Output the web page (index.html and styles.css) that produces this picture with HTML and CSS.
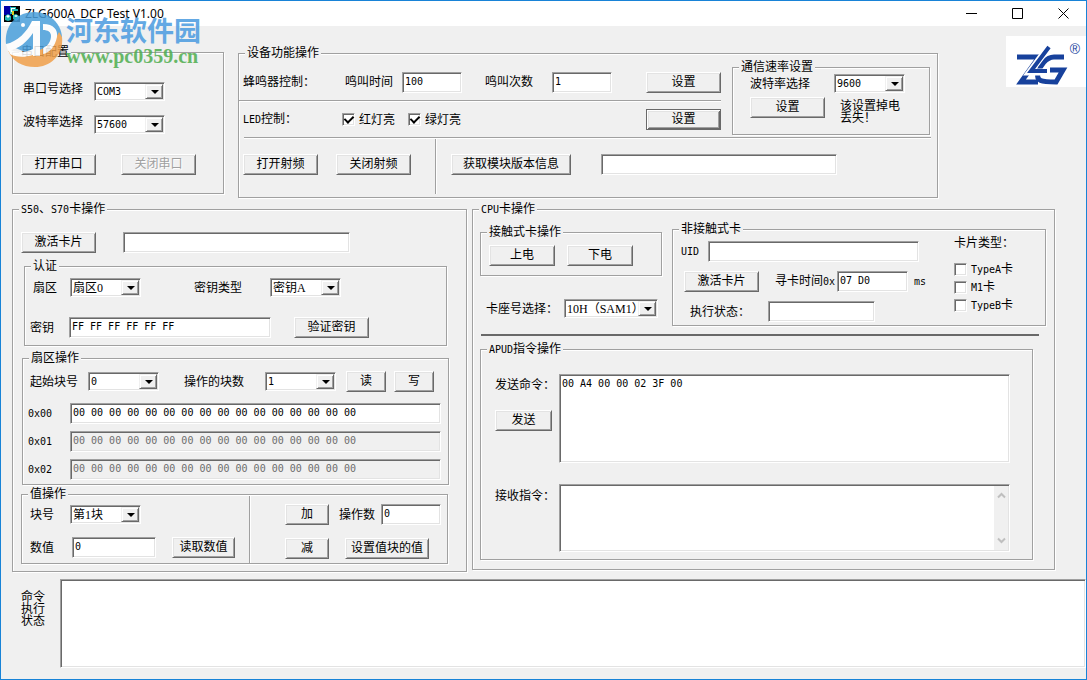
FILE: index.html
```html
<!DOCTYPE html>
<html lang="zh-CN">
<head>
<meta charset="utf-8">
<title>ZLG600A_DCP Test V1.00</title>
<link rel="stylesheet" href="styles.css">
</head>
<body>
<div class="window">
  <header class="titlebar">
    <svg class="app-icon" viewBox="0 0 16 16" aria-hidden="true">
      <rect width="16" height="16" fill="#000"/>
      <rect width="7" height="9" fill="#0000a8"/>
      <path d="M6 1h6v2h2v2h-5v3h-3z" fill="#1fb5b5"/>
      <path d="M7 2h4v1h-3v3h-1z" fill="#fff"/>
      <path d="M1 10l3-2 3 2v4l-3 1-3-1zM9 9l3-1 3 2v3l-3 2-3-2z" fill="#1fb5b5"/>
      <path d="M2 10l2-1 2 1-2 2zM10 10l2-1 2 1-2 1z" fill="#fff"/>
      <rect x="8" y="5" width="2" height="4" fill="#d8d020"/>
    </svg>
    <h1 class="title">ZLG600A_DCP Test V1.00</h1>
    <div class="caption-buttons">
      <button type="button" aria-label="最小化"><svg viewBox="0 0 11 11"><path d="M0 5.5H11"/></svg></button>
      <button type="button" aria-label="最大化"><svg viewBox="0 0 11 11"><path d="M.5 .5H10.5V10.5H.5Z"/></svg></button>
      <button type="button" aria-label="关闭"><svg viewBox="0 0 11 11"><path d="M.5 .5L10.5 10.5M10.5 .5L.5 10.5"/></svg></button>
    </div>
  </header>

  <div class="watermark">
    <svg class="wm-badge" viewBox="0 0 58 56" aria-hidden="true">
      <path d="M1 32C-1 13 12 0 29 0 44 0 56 11 57 25 56 33 52 40 46 45L20 40Z" fill="#4a9fdb"/>
      <path d="M57 25C59 42 46 55 30 55 17 55 7 49 3 38 18 44 44 42 54 20Z" fill="#f0a04a"/>
      <path d="M1 32C12 30 22 20 27 9H35V44H28V21C22 30 14 37 3 39Z" fill="#fff"/>
      <path d="M38 12C49 12 53 18 52 25 50 35 44 41 38 42V36C43 34 46 29 46 24 46 20 43 18 38 18Z" fill="#fff"/>
      <path d="M3 37C12 41 20 41 28 37V43C19 46 10 45 5 42Z" fill="#fff"/>
      <circle cx="18" cy="13" r="2" fill="#fff"/>
    </svg>
    <div class="wm-text">
      <span class="wm-name">河东软件园</span>
      <span class="wm-url">www.pc0359.cn</span>
    </div>
  </div>

  <main class="client">
    <section class="top">
      <fieldset class="group serial">
        <legend>串口配置</legend>
        <div class="field">
          <label for="port">串口号选择</label>
          <span class="combo"><select id="port"><option>COM3</option></select></span>
        </div>
        <div class="field">
          <label for="baud">波特率选择</label>
          <span class="combo"><select id="baud"><option>57600</option></select></span>
        </div>
        <div class="actions">
          <button type="button" class="btn">打开串口</button>
          <button type="button" class="btn" disabled>关闭串口</button>
        </div>
      </fieldset>

      <fieldset class="group device">
        <legend>设备功能操作</legend>
        <div class="device-upper">
          <div class="device-controls">
            <div class="buzzer">
              <span>蜂鸣器控制：</span>
              <label for="beep-time">鸣叫时间</label>
              <input id="beep-time" class="edit w60" value="100">
              <label for="beep-count">鸣叫次数</label>
              <input id="beep-count" class="edit w60" value="1">
              <button type="button" class="btn">设置</button>
            </div>
            <div class="etched-h"></div>
            <div class="led">
              <span><span class="en">LED</span>控制：</span>
              <label class="check"><input type="checkbox" checked>红灯亮</label>
              <label class="check"><input type="checkbox" checked>绿灯亮</label>
              <button type="button" class="btn default">设置</button>
            </div>
          </div>
          <fieldset class="group rate">
            <legend>通信速率设置</legend>
            <div class="rate-row">
              <label for="rate">波特率选择</label>
              <span class="combo"><select id="rate"><option>9600</option></select></span>
            </div>
            <div class="rate-row rate-set">
              <button type="button" class="btn">设置</button>
              <p>该设置掉电丢失！</p>
            </div>
          </fieldset>
        </div>
        <div class="etched-h inset"></div>
        <div class="device-lower">
          <button type="button" class="btn">打开射频</button>
          <button type="button" class="btn">关闭射频</button>
          <div class="etched-v"></div>
          <button type="button" class="btn version">获取模块版本信息</button>
          <input class="edit version-out" aria-label="模块版本信息">
        </div>
      </fieldset>

      <svg class="brand" viewBox="0 0 80 51" role="img" aria-label="ZLG">
        <rect width="80" height="51" fill="#fff"/>
        <g fill="none" stroke="#17419c" stroke-width="5">
          <path d="M11 21H33L15 46H32"/>
          <path d="M58 21H48C40 21 34 30 32 37 30 45 35 46 50 46L57 34H44"/>
          <path d="M44 9L24 36H42" stroke="#fff" stroke-width="7"/>
          <path d="M43 11L25 35H41" stroke-width="4"/>
        </g>
        <text x="69" y="18" text-anchor="middle" fill="#17419c" class="reg">®</text>
      </svg>
    </section>

    <section class="cards">
      <fieldset class="group mifare">
        <legend><span class="en">S50</span>、<span class="en">S70</span>卡操作</legend>
        <div class="activate">
          <button type="button" class="btn">激活卡片</button>
          <input class="edit card-id" aria-label="卡号">
        </div>

        <fieldset class="group auth">
          <legend>认证</legend>
          <div class="auth-row">
            <label for="sector">扇区</label>
            <span class="combo"><select id="sector" class="cjk"><option>扇区0</option></select></span>
            <label for="key-type">密钥类型</label>
            <span class="combo"><select id="key-type" class="cjk"><option>密钥A</option></select></span>
          </div>
          <div class="auth-row key-row">
            <label for="key">密钥</label>
            <input id="key" class="edit" value="FF FF FF FF FF FF">
            <button type="button" class="btn">验证密钥</button>
          </div>
        </fieldset>

        <fieldset class="group sector">
          <legend>扇区操作</legend>
          <div class="sector-row">
            <label for="start-block">起始块号</label>
            <span class="combo"><select id="start-block"><option>0</option></select></span>
            <label for="block-count">操作的块数</label>
            <span class="combo"><select id="block-count"><option>1</option></select></span>
            <button type="button" class="btn small">读</button>
            <button type="button" class="btn small">写</button>
          </div>
          <div class="data-row">
            <label for="b0" class="en">0x00</label>
            <input id="b0" class="edit" value="00 00 00 00 00 00 00 00 00 00 00 00 00 00 00 00">
          </div>
          <div class="data-row">
            <label for="b1" class="en">0x01</label>
            <input id="b1" class="edit" disabled value="00 00 00 00 00 00 00 00 00 00 00 00 00 00 00 00">
          </div>
          <div class="data-row">
            <label for="b2" class="en">0x02</label>
            <input id="b2" class="edit" disabled value="00 00 00 00 00 00 00 00 00 00 00 00 00 00 00 00">
          </div>
        </fieldset>

        <fieldset class="group value">
          <legend>值操作</legend>
          <div class="value-body">
            <div class="value-read">
              <label for="block">块号</label>
              <span class="combo"><select id="block" class="cjk"><option>第1块</option></select></span>
              <label for="number">数值</label>
              <div class="number">
                <input id="number" class="edit" value="0">
                <button type="button" class="btn">读取数值</button>
              </div>
            </div>
            <div class="etched-v"></div>
            <div class="value-write">
              <div class="value-line">
                <button type="button" class="btn op">加</button>
                <label for="operand">操作数</label>
                <input id="operand" class="edit w60" value="0">
              </div>
              <div class="value-line wide">
                <button type="button" class="btn op">减</button>
                <button type="button" class="btn set-value">设置值块的值</button>
              </div>
            </div>
          </div>
        </fieldset>
      </fieldset>

      <fieldset class="group cpu">
        <legend><span class="en">CPU</span>卡操作</legend>
        <div class="cpu-upper">
          <div class="contact-col">
            <fieldset class="group contact">
              <legend>接触式卡操作</legend>
              <div class="power">
                <button type="button" class="btn">上电</button>
                <button type="button" class="btn">下电</button>
              </div>
            </fieldset>
            <div class="slot">
              <label for="slot">卡座号选择：</label>
              <span class="combo"><select id="slot" class="cjk"><option>10H（SAM1）</option></select></span>
            </div>
          </div>
          <fieldset class="group contactless">
            <legend>非接触式卡</legend>
            <div class="contactless-body">
              <div class="search">
                <div class="search-row uid">
                  <label for="uid" class="en">UID</label>
                  <input id="uid" class="edit">
                </div>
                <div class="search-row find">
                  <button type="button" class="btn">激活卡片</button>
                  <label for="find-time">寻卡时间<span class="en">0x</span></label>
                  <input id="find-time" class="edit" value="07 D0">
                  <span class="en">ms</span>
                </div>
                <div class="search-row state">
                  <label for="state">执行状态：</label>
                  <input id="state" class="edit">
                </div>
              </div>
              <div class="types">
                <span class="types-title">卡片类型：</span>
                <label class="check"><input type="checkbox"><span><span class="en">TypeA</span>卡</span></label>
                <label class="check"><input type="checkbox"><span><span class="en">M1</span>卡</span></label>
                <label class="check"><input type="checkbox"><span><span class="en">TypeB</span>卡</span></label>
              </div>
            </div>
          </fieldset>
        </div>
        <div class="bar"></div>
        <fieldset class="group apdu">
          <legend><span class="en">APUD</span>指令操作</legend>
          <div class="apdu-body">
            <div class="apdu-row send">
              <div class="send-side">
                <label for="send">发送命令：</label>
                <button type="button" class="btn">发送</button>
              </div>
              <textarea id="send" class="edit">00 A4 00 00 02 3F 00</textarea>
            </div>
            <div class="apdu-row receive">
              <label for="receive">接收指令：</label>
              <div class="edit scrollbox">
                <textarea id="receive"></textarea>
                <div class="scrollbar">
                  <svg viewBox="0 0 9 9" aria-hidden="true"><path d="M1 6.5L4.500 3 8 6.500"/></svg>
                  <svg viewBox="0 0 9 9" aria-hidden="true"><path d="M1 2.500L4.500 6 8 2.500"/></svg>
                </div>
              </div>
            </div>
          </div>
        </fieldset>
      </fieldset>
    </section>

    <section class="status">
      <label for="log">命令执行状态</label>
      <textarea id="log" class="edit"></textarea>
    </section>
  </main>
</div>
</body>
</html>
```

FILE: styles.css
```css
* { box-sizing: border-box; }

body {
  margin: 0;
  background: #f0f0f0;
  color: #000;
  font: 12px/14px "Liberation Serif", "Noto Sans CJK SC", sans-serif;
}

button, input, select, textarea { font: inherit; color: inherit; margin: 0; }
p { margin: 0; }
label, legend, .btn { white-space: nowrap; }
.en { font-family: "DejaVu Sans Mono", monospace; font-size: 10px; }

.window {
  position: relative;
  display: flex;
  flex-direction: column;
  min-height: 100vh;
  border: 1px solid #1883d7;
}

/* Title bar */
.titlebar {
  display: flex;
  align-items: center;
  height: 25px;
  padding-left: 3px;
  background: #fff;
}
.app-icon { width: 16px; height: 16px; }
.title {
  flex: 1;
  margin: 0 0 0 5px;
  font: 12px/16px "Noto Sans", sans-serif;
}
.caption-buttons { display: flex; }
.caption-buttons button {
  display: grid;
  place-items: center;
  width: 46px;
  height: 24px;
  padding: 0;
  border: 0;
  background: none;
}
.caption-buttons svg { width: 11px; height: 11px; fill: none; stroke: #000; }

/* Site mark laid over the window */
.watermark {
  position: absolute;
  left: 4px;
  top: 11px;
  display: flex;
  opacity: .85;
  pointer-events: none;
}
.wm-badge { width: 58px; height: 56px; }
.wm-text { display: flex; flex-direction: column; margin: 4px 0 0 3px; }
.wm-name {
  color: #4a9be0;
  font: bold 27px/28px "Noto Sans CJK SC", sans-serif;
}
.wm-url {
  color: #4fae4f;
  font: bold 20px/24px "Liberation Serif", serif;
}

/* Controls */
.group {
  min-width: 0;
  margin: 0;
  padding: 0;
  border: 1px solid #a0a0a0;
  box-shadow: 1px 1px #fff, inset 1px 1px #fff;
}
.group > legend {
  margin-left: 6px;
  padding: 0 2px;
  background: #f0f0f0;
  line-height: 13px;
}

.edit {
  width: 100%;
  height: 21px;
  padding: 0 2px;
  border: 1px solid;
  border-color: #a0a0a0 #fff #fff #a0a0a0;
  border-radius: 0;
  outline: 0;
  background: #fff;
  box-shadow: inset 1px 1px #696969, inset -1px -1px #e3e3e3;
  font: 10px/14px "DejaVu Sans Mono", monospace;
}
input.edit { padding-bottom: 2px; }
.edit:disabled { background: #f0f0f0; color: #6d6d6d; }
.w60 { width: 60px; }
textarea { display: block; resize: none; }
textarea.edit { padding: 2px; }

.combo { position: relative; display: block; width: 71px; height: 19px; }
.combo select {
  width: 100%;
  height: 100%;
  padding: 0 18px 0 2px;
  appearance: none;
  border: 1px solid;
  border-color: #a0a0a0 #fff #fff #a0a0a0;
  border-radius: 0;
  background: #fff;
  box-shadow: inset 1px 1px #696969, inset -1px -1px #e3e3e3;
  font: 10px/14px "DejaVu Sans Mono", monospace;
}
.combo select.cjk { font: inherit; }
.combo::before {
  content: "";
  position: absolute;
  top: 2px;
  right: 2px;
  bottom: 2px;
  width: 16px;
  border: 1px solid;
  border-color: #f0f0f0 #696969 #696969 #f0f0f0;
  background: #f0f0f0;
  box-shadow: inset 1px 1px #fff, inset -1px -1px #a0a0a0;
  pointer-events: none;
}
.combo::after {
  content: "";
  position: absolute;
  top: 8px;
  right: 6px;
  border: 4px solid transparent;
  border-top-color: #000;
  border-bottom: 0;
  pointer-events: none;
}

.btn {
  flex: none;
  width: 75px;
  height: 21px;
  padding: 0;
  border: 1px solid;
  border-color: #fff #696969 #696969 #fff;
  background: #f0f0f0;
  box-shadow: inset 1px 1px #e3e3e3, inset -1px -1px #a0a0a0;
  line-height: 19px;
}
.btn:disabled { color: #a0a0a0; text-shadow: 1px 1px #fff; }
.btn.default {
  border-color: #696969;
  box-shadow: inset 1px 1px #fff, inset -1px -1px #696969, inset 2px 2px #e3e3e3, inset -2px -2px #a0a0a0;
}

.check { display: flex; align-items: center; gap: 4px; }
.check input {
  display: grid;
  place-items: center;
  width: 13px;
  height: 13px;
  appearance: none;
  border: 1px solid;
  border-color: #a0a0a0 #fff #fff #a0a0a0;
  background: #fff;
  box-shadow: inset 1px 1px #696969, inset -1px -1px #e3e3e3;
}
.check input:checked::after {
  content: "";
  width: 4px;
  height: 7px;
  margin-bottom: 2px;
  border: solid #000;
  border-width: 0 2px 2px 0;
  transform: rotate(45deg);
}

.etched-h { height: 2px; border-top: 1px solid #a0a0a0; background: #fff; }
.etched-h.inset { margin: 0 6px 0 5px; }
.etched-v { width: 2px; border-left: 1px solid #a0a0a0; background: #fff; }

/* Top row */
.client { display: flex; flex: 1; flex-direction: column; }
.top {
  display: grid;
  grid-template-columns: 212px minmax(0, 700px) 1fr;
  gap: 14px;
  align-items: start;
  padding: 20px 0 0 11px;
}

.serial > .field {
  display: grid;
  grid-template-columns: 71px 71px;
  align-items: start;
  margin: 14px 0 0 10px;
}
.serial > legend + .field { margin-top: 23px; }
.serial > .actions { display: flex; gap: 25px; padding: 20px 8px 18px; }

.device { margin-top: 1px; }
.device-upper {
  display: grid;
  grid-template-columns: 482px 198px;
  gap: 11px;
  align-items: start;
}
.buzzer, .led { display: grid; align-items: center; padding-left: 4px; }
.buzzer { grid-template-columns: 102px 57px 83px 67px 94px 75px; height: 40px; padding-top: 4px; }
.led { grid-template-columns: 99px 66px 238px 75px; height: 35px; }
.rate { margin-top: 1px; padding-bottom: 13px; }
.rate-row { display: grid; grid-template-columns: 84px 71px; align-items: center; padding-left: 17px; }
.rate-set {
  grid-template-columns: 90px 62px;
  align-items: start;
  height: 28px;
  padding-top: 4px;
}
.rate-set p { padding-top: 3px; line-height: 12px; }
.device-lower {
  display: flex;
  align-items: center;
  height: 50px;
  margin-bottom: 8px;
  padding-left: 4px;
}
.device-lower .btn + .btn { margin-left: 18px; }
.device-lower .etched-v { align-self: flex-start; height: 55px; margin: 0 14px 0 24px; }
.device-lower .version { width: 120px; }
.version-out { flex: 0 1 236px; margin-left: 30px; }

.brand { width: 80px; height: 51px; margin-top: -10px; justify-self: end; }
.reg { font: 14px "Liberation Sans", sans-serif; }

/* Card panels */
.cards {
  display: grid;
  grid-template-columns: minmax(0, 455fr) minmax(0, 583fr);
  gap: 5px;
  align-items: start;
  padding: 5px 31px 0 11px;
}

.mifare { padding-bottom: 7px; }
.activate { display: flex; gap: 27px; padding: 16px 8px 7px; }
.card-id { flex: 0 1 227px; }

.auth { margin: 0 19px 0 11px; padding-bottom: 7px; }
.auth-row {
  display: grid;
  grid-template-columns: 37px 124px 76px 71px;
  align-items: center;
  padding: 5px 0 0 8px;
}
.key-row { grid-template-columns: 39px 202px 75px; padding: 20px 0 0 5px; }
.key-row .btn { margin-left: 23px; }

.sector { margin: 6px 17px 0 9px; padding-bottom: 4px; }
.sector-row {
  display: grid;
  grid-template-columns: 58px 96px 81px 81px 48px 42px;
  align-items: center;
  padding: 6px 0 4px 7px;
}
.btn.small { width: 40px; }
.data-row {
  display: grid;
  grid-template-columns: 42px minmax(0, 371px);
  align-items: center;
  padding: 7px 0 0 5px;
}

.value { margin: 3px 18px 0 8px; }
.value-body { display: grid; grid-template-columns: 227px 2px 1fr; }
.value-body .etched-v { margin-top: -5px; }
.value-read {
  display: grid;
  grid-template-columns: 40px 1fr;
  row-gap: 13px;
  align-items: center;
  align-content: start;
  padding: 4px 0 5px 8px;
}
.number { display: flex; gap: 16px; padding-left: 2px; }
.number .edit { width: 84px; }
.number .btn { width: 63px; }
.value-write { display: grid; gap: 13px; align-content: start; padding: 3px 0 0 34px; }
.value-line { display: grid; grid-template-columns: 54px 42px 60px; align-items: center; }
.value-line.wide { grid-template-columns: 60px 84px; }
.btn.op { width: 44px; }
.btn.set-value { width: 84px; }

.cpu { padding-bottom: 9px; }
.cpu-upper { display: grid; grid-template-columns: 182px minmax(0, 374px); gap: 10px; padding: 7px 8px 0 7px; }
.contact { margin-top: 3px; }
.power { display: flex; gap: 12px; padding: 6px 8px 9px; }
.power .btn { width: 66px; }
.slot { display: grid; grid-template-columns: 78px 94px; align-items: center; padding: 23px 0 0 6px; }
.slot .combo { width: 94px; }

.contactless-body { display: grid; grid-template-columns: 281px 1fr; padding: 5px 0 3px; }
.search { display: grid; gap: 9px; }
.search-row { display: grid; align-items: center; }
.uid { grid-template-columns: 27px 211px; padding-left: 8px; }
.find { grid-template-columns: 91px 62px 71px 20px; padding-left: 11px; }
.find > .en { padding-left: 6px; }
.state { grid-template-columns: 78px 107px; padding-left: 17px; }
.types { display: grid; align-content: start; gap: 3px; margin-top: -4px; }
.types-title { margin-bottom: 10px; line-height: 12px; }

.bar { height: 2px; margin: 8px 15px 0 8px; background: #696969; }

.apdu { margin: 7px 21px 0 7px; }
.apdu-body { padding: 18px 22px 7px 14px; }
.apdu-row { display: grid; grid-template-columns: 64px 1fr; }
.send .edit { height: 89px; }
.send-side { display: grid; gap: 18px; align-content: start; padding-top: 4px; }
.send-side .btn { width: 57px; }
.receive { padding-top: 21px; }
.receive label { padding-top: 5px; }
.scrollbox { display: flex; height: 68px; padding: 1px; }
.scrollbox textarea { flex: 1; min-width: 0; padding: 2px; border: 0; outline: 0; background: #fff; }
.scrollbar {
  display: flex;
  flex-direction: column;
  justify-content: space-between;
  align-items: center;
  width: 14px;
  padding: 5px 0;
  background: #f0f0f0;
}
.scrollbar svg { width: 9px; height: 9px; fill: none; stroke: #bfbfbf; stroke-width: 2; }

/* Command log */
.status {
  display: grid;
  flex: 1;
  grid-template-columns: 39px 1fr;
  min-height: 80px;
  padding: 7px 0 11px 20px;
}
.status label { width: 24px; padding-top: 12px; line-height: 12px; white-space: normal; }
.status .edit { height: 100%; }
```
